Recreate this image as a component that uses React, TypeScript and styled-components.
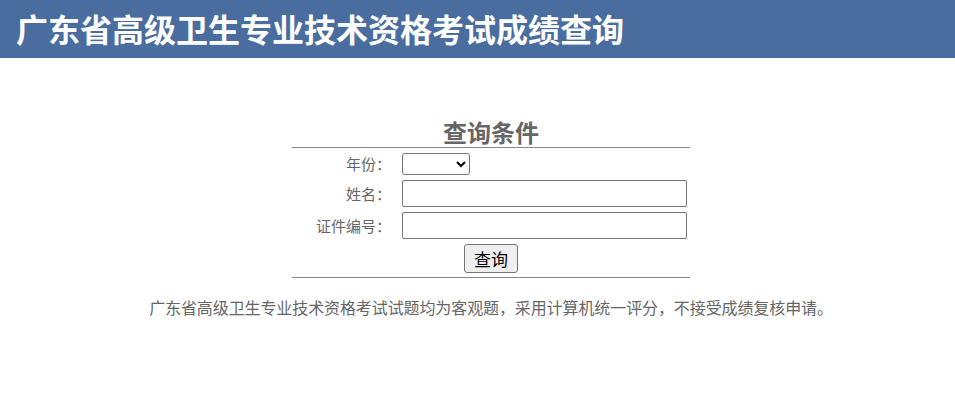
import styled, { createGlobalStyle } from 'styled-components';

const GlobalStyle = createGlobalStyle`
  html, body {
    margin: 0;
    padding: 0;
    background: #fff;
    font-family: 'Noto Sans CJK SC', sans-serif;
  }
`;

const Header = styled.div`
  background: #4a6da0;
  height: 58px;
  display: flex;
  align-items: center;
  padding-left: 16px;
  padding-bottom: 2px;
  box-sizing: border-box;
  color: #fff;
  font-size: 32px;
  font-weight: 700;
`;

const Main = styled.div`
  width: 982px;
  padding-top: 58px;
  display: flex;
  flex-direction: column;
  align-items: center;
`;

const Caption = styled.div`
  font-size: 24px;
  font-weight: 700;
  color: #666;
  line-height: 31px;
`;

const Form = styled.div`
  width: 398px;
  border-top: 1px solid #888;
  border-bottom: 1px solid #888;
  display: grid;
  grid-template-columns: 99px 1fr;
  column-gap: 11px;
  row-gap: 5px;
  padding: 5px 0 4px;
  align-items: center;
`;

const Label = styled.label`
  text-align: right;
  font-size: 15px;
  color: #666;
  line-height: 20px;
`;

const Select = styled.select`
  display: block;
  width: 68px;
  height: 22px;
  border: 1px solid #767676;
  border-radius: 3px;
  background: #fff;
`;

const Input = styled.input`
  display: block;
  width: 285px;
  height: 27px;
  box-sizing: border-box;
  border: 1px solid #767676;
  border-radius: 2px;
  padding: 1px 4px;
`;

const ButtonCell = styled.div`
  grid-column: 1 / 3;
  display: flex;
  justify-content: center;
`;

const Button = styled.button`
  font-family: 'Noto Sans CJK SC', sans-serif;
  font-size: 17px;
  height: 29px;
  padding: 0 9px;
  color: #000;
  background: #efefef;
  border: 1px solid #767676;
  border-radius: 3px;
  line-height: 1;
`;

const Note = styled.p`
  margin: 17px 0 0;
  font-size: 16px;
  color: #666;
  letter-spacing: -0.1px;
`;

export default function App() {
  return (
    <>
      <GlobalStyle />
      <Header>广东省高级卫生专业技术资格考试成绩查询</Header>
      <Main>
        <Caption>查询条件</Caption>
        <Form>
          <Label>年份：</Label>
          <Select>
            <option></option>
          </Select>
          <Label>姓名：</Label>
          <Input />
          <Label>证件编号：</Label>
          <Input />
          <ButtonCell>
            <Button>查询</Button>
          </ButtonCell>
        </Form>
        <Note>广东省高级卫生专业技术资格考试试题均为客观题，采用计算机统一评分，不接受成绩复核申请。</Note>
      </Main>
    </>
  );
}
